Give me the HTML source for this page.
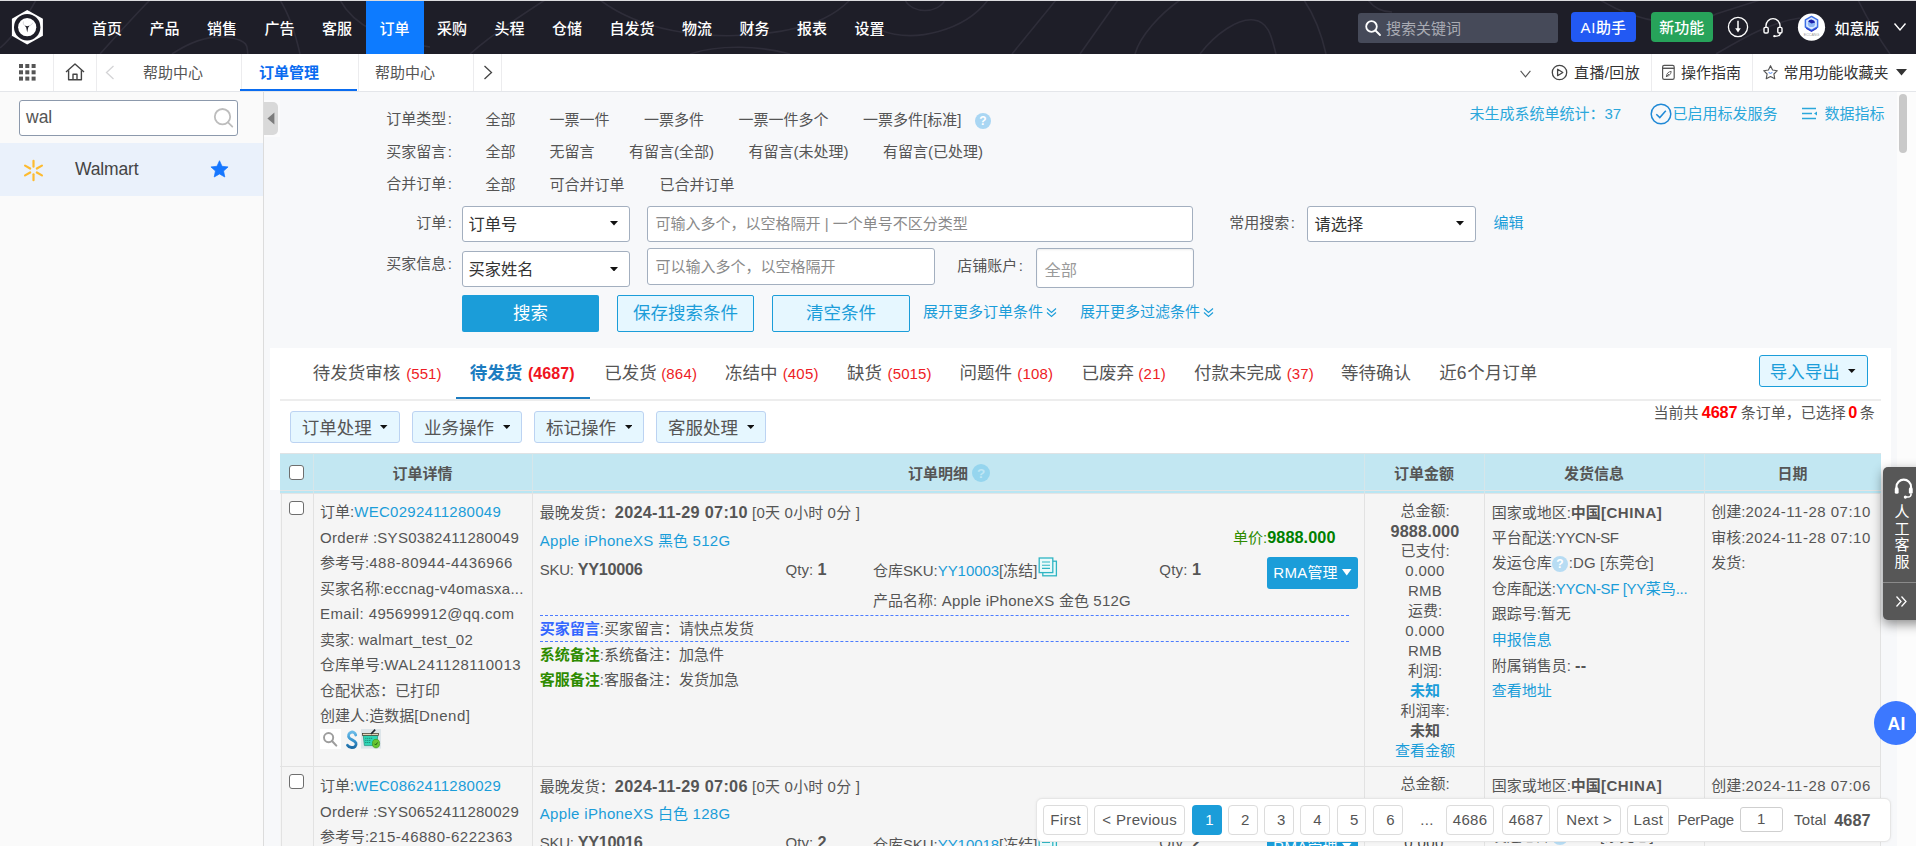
<!DOCTYPE html>
<html lang="zh-CN">
<head>
<meta charset="utf-8">
<title>订单管理</title>
<style>
*{box-sizing:border-box;margin:0;padding:0}
html,body{width:1916px;height:846px;overflow:hidden;background:#f7f8fa}
body{font-family:"Liberation Sans","Noto Sans CJK SC",sans-serif;font-size:15px;color:#333;position:relative}
.abs{position:absolute;white-space:nowrap}
a{color:#1b9dd9;text-decoration:none}
/* ---------- top nav ---------- */
#nav{position:absolute;left:0;top:0;width:1916px;height:54px;background:#1e1e28;overflow:hidden}
#nav .it{position:absolute;top:0;height:54px;line-height:57px;color:#fff;font-size:15px;white-space:nowrap;font-weight:500}
#nav .act{position:absolute;left:365.5px;top:0;width:58.5px;height:54px;background:#0d7bff}
/* ---------- tab bar ---------- */
#tabbar{position:absolute;left:0;top:54px;width:1916px;height:38px;background:#fff;border-bottom:1px solid #e4e6ea}
#tabbar .t{position:absolute;top:0;height:37px;line-height:37px;font-size:15px;color:#555;white-space:nowrap}
#tabbar .vl{position:absolute;top:0;width:1px;height:37px;background:#ececee}
/* ---------- sidebar ---------- */
#side{position:absolute;left:0;top:92px;width:264px;height:754px;background:#fafafa;border-right:1px solid #dcdcdc}
/* ---------- main ---------- */
#main{position:absolute;left:264px;top:92px;width:1652px;height:754px;background:#f7f8fa;overflow:hidden}
.f{position:absolute;white-space:nowrap;font-size:15px;line-height:20px;color:#444}
.lnk{color:#1b9dd9}
</style>
</head>
<body>
<!-- NAV -->
<div id="nav">
<svg class="abs" style="left:0;top:0" width="1916" height="54" viewBox="0 0 1916 54" fill="none" stroke="#2e2d39" stroke-width="1.6">
<path d="M0 48 C14 36 26 18 36 0"/><path d="M100 54 C118 34 136 14 150 0"/><path d="M172 54 C190 42 212 34 232 38 S246 50 248 54"/>
<path d="M280 0 C290 16 296 36 300 54"/><path d="M340 0 C352 22 380 40 430 47"/><path d="M470 54 C490 36 520 16 545 0"/>
<path d="M600 0 C640 30 700 40 760 34 S840 10 850 0"/><path d="M690 54 C720 44 760 46 790 54"/>
<path d="M905 0 C912 14 938 14 945 0"/><path d="M880 30 C915 44 965 30 988 0"/>
<path d="M1012 54 L1056 0"/><path d="M1080 54 L1118 0"/><path d="M1135 54 C1140 36 1160 14 1180 0"/>
<path d="M1200 54 C1215 34 1238 18 1254 20 S1272 40 1276 54"/><path d="M1304 0 C1316 18 1322 36 1326 54"/><path d="M1368 0 C1374 8 1382 12 1392 12"/>
<path d="M1600 0 C1640 24 1690 30 1716 14 L1760 0"/><path d="M1716 54 C1740 40 1770 22 1800 18"/><path d="M1858 0 C1868 20 1880 40 1890 54"/>
</svg>
<div class="act"></div><div class="abs" style="left:0;top:0;width:1916px;height:1px;background:#dcdcdf"></div>
<svg class="abs" style="left:9px;top:8px" width="38" height="38" viewBox="0 0 38 38">
<polygon points="18.2,2 33.9,10.7 33.9,27.8 18.2,36.5 2.9,27.8 2.9,10.7" fill="#fff"/>
<circle cx="18.2" cy="19.2" r="13.2" fill="#1e1e28"/>
<circle cx="18.2" cy="19.2" r="9.1" fill="#fff"/>
<path d="M18.2 24.5 L17.2 19.6 L15.6 17.6 L18.2 18.3 L20.8 17.6 L19.2 19.6 Z" fill="#1e1e28"/>
<path d="M14.5 13.5 C14 15 14.5 16.5 15.6 17.6 M21 17.5 C22.3 17 23.3 16 23.6 14.8" stroke="#c9c9cf" stroke-width=".8" fill="none"/>
</svg>
<div class="it" style="left:92px">首页</div>
<div class="it" style="left:149.5px">产品</div>
<div class="it" style="left:207px">销售</div>
<div class="it" style="left:264.5px">广告</div>
<div class="it" style="left:322px">客服</div>
<div class="it" style="left:379.5px">订单</div>
<div class="it" style="left:437px">采购</div>
<div class="it" style="left:494.5px">头程</div>
<div class="it" style="left:552px">仓储</div>
<div class="it" style="left:609.5px">自发货</div>
<div class="it" style="left:682px">物流</div>
<div class="it" style="left:739.5px">财务</div>
<div class="it" style="left:797px">报表</div>
<div class="it" style="left:854.5px">设置</div>
<div class="abs" style="left:1358px;top:13px;width:200px;height:30px;background:#464a59;border-radius:3px"></div>
<svg class="abs" style="left:1364px;top:19px" width="18" height="18" viewBox="0 0 18 18" fill="none" stroke="#fff" stroke-width="1.8"><circle cx="7.5" cy="7.5" r="5.3"/><path d="M11.5 11.5 L16 16" stroke-linecap="round"/></svg>
<div class="abs" style="left:1386px;top:13px;line-height:31px;font-size:15px;color:#a9abb3">搜索关键词</div>
<div class="abs" style="left:1570.5px;top:12px;width:65.5px;font-weight:500;height:30px;background:#2259f3;border-radius:4px;color:#fff;font-size:15px;line-height:31px;text-align:center"><span style="letter-spacing:.6px">AI</span>助手</div>
<div class="abs" style="left:1650.5px;top:12px;width:62.5px;font-weight:500;height:30px;background:#27a35a;border-radius:4px;color:#fff;font-size:15px;line-height:31px;text-align:center">新功能</div>
<svg class="abs" style="left:1727px;top:16px" width="22" height="22" viewBox="0 0 22 22" fill="none" stroke="#fff" stroke-width="1.3"><circle cx="11" cy="11" r="9.6"/><path d="M11 4.8 V13.5" stroke-width="1.5"/><path d="M8.2 12.3 H13.8 L11 16.4 Z" fill="#fff" stroke="none"/></svg>
<svg class="abs" style="left:1761px;top:15px" width="24" height="24" viewBox="0 0 24 24" fill="none" stroke="#fff" stroke-width="1.4"><path d="M5 13 V10.6 a7 7 0 0 1 14 0 V13"/><rect x="3" y="12.4" width="4.2" height="5.6" rx="1.2"/><rect x="16.8" y="12.4" width="4.2" height="5.6" rx="1.2"/><path d="M19.3 18 c0 2.3 -2.4 3.3 -5.2 3.3" stroke-linecap="round"/><circle cx="13.3" cy="21.2" r="1.1" fill="#fff" stroke="none"/></svg>
<svg class="abs" style="left:1797px;top:13px" width="29" height="29" viewBox="0 0 29 29"><circle cx="14.5" cy="14.2" r="13.6" fill="#fff"/><polygon points="14.5,3.4 20.6,6.9 20.6,14 14.5,17.5 8.4,14 8.4,6.9" fill="#dbe8ff" stroke="#3d6fe6" stroke-width="1.5" stroke-linejoin="round"/><circle cx="14.5" cy="10.4" r="3.7" fill="#8db6f6"/><path d="M14.5 10.4 L11.2 8.6 A3.7 3.7 0 0 1 18.1 9.6 Z" fill="#1c1fa8"/><path d="M9.2 15.2 L14.5 18.2 L19.8 15.2" fill="none" stroke="#2a36c8" stroke-width="1.3"/><text x="14.5" y="23.4" font-size="3.6" text-anchor="middle" fill="#9a9a9a" font-family="Liberation Sans, sans-serif">ECCANG</text></svg>
<div class="it" style="left:1834.5px">如意版</div>
<svg class="abs" style="left:1893px;top:22px" width="14" height="10" viewBox="0 0 14 10" fill="none" stroke="#fff" stroke-width="1.4"><path d="M1.5 1.5 L7 8 L12.5 1.5"/></svg>
</div>
<!-- TABBAR -->
<div id="tabbar">
<svg class="abs" style="left:19px;top:10px" width="17" height="17" viewBox="0 0 17 17" fill="#555"><rect x="0" y="0" width="4" height="4"/><rect x="6.3" y="0" width="4" height="4"/><rect x="12.6" y="0" width="4" height="4"/><rect x="0" y="6.3" width="4" height="4"/><rect x="6.3" y="6.3" width="4" height="4"/><rect x="12.6" y="6.3" width="4" height="4"/><rect x="0" y="12.6" width="4" height="4"/><rect x="6.3" y="12.6" width="4" height="4"/><rect x="12.6" y="12.6" width="4" height="4"/></svg>
<div class="vl" style="left:53px"></div>
<svg class="abs" style="left:65px;top:9px" width="20" height="18" viewBox="0 0 20 18" fill="none" stroke="#444" stroke-width="1.4" stroke-linejoin="round"><path d="M1 9 L10 1 L19 9"/><path d="M3.6 7.2 V16.8 H16.4 V7.2"/><path d="M8 16.8 V11.2 H12 V16.8"/></svg>
<div class="vl" style="left:96px"></div>
<svg class="abs" style="left:105px;top:11px" width="10" height="15" viewBox="0 0 10 15" fill="none" stroke="#d4d4d6" stroke-width="1.3"><path d="M8.5 1 L1.5 7.5 L8.5 14"/></svg>
<div class="t" style="left:143px">帮助中心</div>
<div class="vl" style="left:241px"></div>
<div class="t" style="left:259px;color:#0a6cf0;font-weight:bold">订单管理</div>
<div class="abs" style="left:240px;top:35px;width:117px;height:2px;background:#0a6cf0"></div>
<div class="vl" style="left:358px"></div>
<div class="t" style="left:375px">帮助中心</div>
<div class="vl" style="left:473px"></div>
<svg class="abs" style="left:483px;top:11px" width="10" height="15" viewBox="0 0 10 15" fill="none" stroke="#444" stroke-width="1.3"><path d="M1.5 1 L8.5 7.5 L1.5 14"/></svg>
<div class="vl" style="left:501px"></div>
<svg class="abs" style="left:1520px;top:16px" width="11" height="8" viewBox="0 0 11 8" fill="none" stroke="#555" stroke-width="1.1"><path d="M.6 .8 L5.5 6.8 L10.4 .8"/></svg>
<svg class="abs" style="left:1551px;top:10px" width="17" height="17" viewBox="0 0 17 17" fill="none" stroke="#444" stroke-width="1.3"><circle cx="8.5" cy="8.5" r="7.2"/><path d="M6.6 5.3 V11.7 L11.8 8.5 Z" stroke-linejoin="round"/></svg>
<div class="t" style="left:1574px;color:#333;letter-spacing:.4px">直播/回放</div>
<div class="vl" style="left:1651px"></div>
<svg class="abs" style="left:1661px;top:10px" width="15" height="17" viewBox="0 0 15 17" fill="none" stroke="#555" stroke-width="1.2"><rect x="1.6" y="1.4" width="11.6" height="14" rx="1.6"/><path d="M1.6 4.3 H13.2" stroke-width="1.4"/><path d="M5.4 12.4 C5.6 9.6 7.4 7.6 10.2 7.4 C10 10 8.4 12 5.4 12.4 Z M5 13 L8 10" stroke-width=".9"/></svg>
<div class="t" style="left:1681px;color:#333">操作指南</div>
<div class="vl" style="left:1752px"></div>
<svg class="abs" style="left:1762px;top:9.5px" width="17" height="17" viewBox="0 0 18 18" fill="none" stroke="#555" stroke-width="1.2" stroke-linejoin="round"><path d="M9 1.8 L11.2 6.4 L16.2 7.1 L12.6 10.6 L13.5 15.6 L9 13.2 L4.5 15.6 L5.4 10.6 L1.8 7.1 L6.8 6.4 Z"/><path d="M7 9 Q9 10.8 11 9" stroke="#3b7bf0" stroke-width="1"/></svg>
<div class="t" style="left:1783.5px;color:#333">常用功能收藏夹</div>
<svg class="abs" style="left:1896px;top:15px" width="11" height="7" viewBox="0 0 11 7" fill="#333"><path d="M0 0 H11 L5.5 6.5 Z"/></svg>
</div>
<!-- SIDEBAR -->
<div id="side">
<div class="abs" style="left:19px;top:8px;width:219px;height:36px;background:#fff;border:1px solid #8c99ac;border-radius:3px"></div>
<div class="abs" style="left:26px;top:8px;line-height:35px;font-size:17.5px;color:#555">wal</div>
<svg class="abs" style="left:212px;top:14px" width="24" height="24" viewBox="0 0 24 24" fill="none" stroke="#bdbdbd" stroke-width="1.8"><circle cx="10.5" cy="10.7" r="7.7"/><path d="M16 16.4 L20.3 20.6" stroke-linecap="round"/></svg>
<div class="abs" style="left:0;top:51px;width:263px;height:53px;background:#eaf1fb"></div>
<svg class="abs" style="left:21px;top:66px" width="25" height="25" viewBox="-13.6 -13.6 27.2 27.2" stroke="#fdbb30" stroke-width="2.4" stroke-linecap="round"><g id="spk"><path d="M0 -4.2 V-10.6"/><path d="M0 4.2 V10.6"/></g><use href="#spk" transform="rotate(60)"/><use href="#spk" transform="rotate(120)"/></svg>
<div class="abs" style="left:75px;top:51px;line-height:53px;font-size:17.5px;color:#444;letter-spacing:-.15px">Walmart</div>
<svg class="abs" style="left:210px;top:67.5px" width="19" height="18" viewBox="0 0 21 20" fill="#1677ff"><path d="M10.5 .8 L13.3 7 L20 7.7 L15 12.2 L16.4 18.9 L10.5 15.5 L4.6 18.9 L6 12.2 L1 7.7 L7.7 7 Z" stroke="#1677ff" stroke-width=".8" stroke-linejoin="round"/></svg>
</div>

<!-- MAIN -->
<div id="main">
<div class="abs" style="left:0;top:8px;width:16px;height:37px;background:#fbfbfc"></div>
<div class="abs" style="left:0;top:10px;width:13.5px;height:33px;background:#d9d9d9;border-radius:0 5px 5px 0"></div>
<svg class="abs" style="left:2.5px;top:20px" width="8" height="13" viewBox="0 0 8 13" fill="#7c7c7c"><path d="M7.4 .4 V12.6 L.4 6.5 Z"/></svg>
<div class="f" style="right:1464px;top:17px;font-size:15px;line-height:20px;color:#555;">订单类型<span style="margin-left:1.5px">:</span></div>
<div class="f " style="left:221.5px;top:18px;font-size:15px;line-height:20px;color:#555;">全部</div>
<div class="f " style="left:285.5px;top:18px;font-size:15px;line-height:20px;color:#555;">一票一件</div>
<div class="f " style="left:380px;top:18px;font-size:15px;line-height:20px;color:#555;">一票多件</div>
<div class="f " style="left:474.5px;top:18px;font-size:15px;line-height:20px;color:#555;">一票一件多个</div>
<div class="f " style="left:599px;top:18px;font-size:15px;line-height:20px;color:#555;">一票多件[标准]</div>
<div class="f" style="right:1464px;top:49.5px;font-size:15px;line-height:20px;color:#555;">买家留言<span style="margin-left:1.5px">:</span></div>
<div class="f " style="left:221.5px;top:50px;font-size:15px;line-height:20px;color:#555;">全部</div>
<div class="f " style="left:285.5px;top:50px;font-size:15px;line-height:20px;color:#555;">无留言</div>
<div class="f " style="left:365px;top:50px;font-size:15px;line-height:20px;color:#555;">有留言(全部)</div>
<div class="f " style="left:484.5px;top:50px;font-size:15px;line-height:20px;color:#555;">有留言(未处理)</div>
<div class="f " style="left:619px;top:50px;font-size:15px;line-height:20px;color:#555;">有留言(已处理)</div>
<div class="f" style="right:1464px;top:82px;font-size:15px;line-height:20px;color:#555;">合并订单<span style="margin-left:1.5px">:</span></div>
<div class="f " style="left:221.5px;top:83px;font-size:15px;line-height:20px;color:#555;">全部</div>
<div class="f " style="left:285.5px;top:83px;font-size:15px;line-height:20px;color:#555;">可合并订单</div>
<div class="f " style="left:395.5px;top:83px;font-size:15px;line-height:20px;color:#555;">已合并订单</div>
<div class="abs" style="left:711px;top:21px;width:16px;height:16px;border-radius:50%;background:#a9d6f3;color:#fff;font-size:12px;line-height:17px;text-align:center;font-weight:bold">?</div>
<div class="f " style="left:1205.5px;top:12px;font-size:15px;line-height:20px;color:#2ba7db;">未生成系统单统计：37</div>
<svg class="abs" style="left:1386px;top:11px" width="22" height="22" viewBox="0 0 22 22" ><circle cx="11" cy="11" r="9.8" fill="none" stroke="#2089d6" stroke-width="1.5"/><path d="M6.3 11.2 L9.8 14.6 L15.8 7.8" fill="none" stroke="#2089d6" stroke-width="1.5"/></svg>
<div class="f " style="left:1408.5px;top:12px;font-size:15px;line-height:20px;color:#2ba7db;">已启用标发服务</div>
<svg class="abs" style="left:1537px;top:15px" width="17" height="13" viewBox="0 0 17 13" ><path d="M1 1.5 H15 M1 6.5 H11 M1 11.5 H15" stroke="#2ba7db" stroke-width="1.6" fill="none"/><path d="M16 4.6 V8.4 L13 6.5 Z" fill="#2ba7db"/></svg>
<div class="f " style="left:1560.5px;top:12px;font-size:15px;line-height:20px;color:#2ba7db;">数据指标</div>
<div class="f" style="right:1464px;top:121px;font-size:15px;line-height:20px;color:#555;">订单<span style="margin-left:1.5px">:</span></div>
<div class="abs" style="left:198px;top:114px;width:168px;height:36px;background:#fff;border:1px solid #a3afbf;border-radius:3px"></div>
<div class="f " style="left:204.5px;top:122px;font-size:16.25px;line-height:20px;color:#333;">订单号</div>
<svg class="abs" style="left:346px;top:129.45px" width="8" height="4.5" viewBox="0 0 8 4.5" ><path d="M0 0 H8 L4.0 4.5 Z" fill="#111"/></svg>
<div class="abs" style="left:383px;top:114px;width:546px;height:36px;background:#fff;border:1px solid #a3afbf;border-radius:3px"></div>
<div class="f " style="left:391.5px;top:121.5px;font-size:15px;line-height:20px;color:#8a8a8a;">可输入多个，以空格隔开 | 一个单号不区分类型</div>
<div class="f" style="right:621px;top:120.5px;font-size:15px;line-height:20px;color:#555;">常用搜索<span style="margin-left:1.5px">:</span></div>
<div class="abs" style="left:1043px;top:114px;width:169px;height:36px;background:#fff;border:1px solid #a3afbf;border-radius:3px"></div>
<div class="f " style="left:1050.5px;top:122px;font-size:16.25px;line-height:20px;color:#333;">请选择</div>
<svg class="abs" style="left:1192px;top:129.45px" width="8" height="4.5" viewBox="0 0 8 4.5" ><path d="M0 0 H8 L4.0 4.5 Z" fill="#111"/></svg>
<div class="f " style="left:1229.5px;top:120.5px;font-size:15px;line-height:20px;color:#1b9dd9;">编辑</div>
<div class="f" style="right:1464px;top:162px;font-size:15px;line-height:20px;color:#555;">买家信息<span style="margin-left:1.5px">:</span></div>
<div class="abs" style="left:198px;top:159px;width:168px;height:36px;background:#fff;border:1px solid #a3afbf;border-radius:3px"></div>
<div class="f " style="left:204.5px;top:167px;font-size:16.25px;line-height:20px;color:#333;">买家姓名</div>
<svg class="abs" style="left:346px;top:174.55px" width="8" height="4.5" viewBox="0 0 8 4.5" ><path d="M0 0 H8 L4.0 4.5 Z" fill="#111"/></svg>
<div class="abs" style="left:383px;top:156px;width:288px;height:37px;background:#fff;border:1px solid #a3afbf;border-radius:3px"></div>
<div class="f " style="left:391.5px;top:164.5px;font-size:15px;line-height:20px;color:#8a8a8a;">可以输入多个，以空格隔开</div>
<div class="f" style="right:893px;top:164px;font-size:15px;line-height:20px;color:#555;">店铺账户<span style="margin-left:1.5px">:</span></div>
<div class="abs" style="left:772px;top:156px;width:158px;height:40px;background:#fff;border:1px solid #a3afbf;border-radius:3px;box-shadow:inset 0 1px 2px rgba(0,0,0,.08)"></div>
<div class="f " style="left:780.5px;top:167.5px;font-size:16.25px;line-height:20px;color:#9a9a9a;">全部</div>
<div class="abs" style="left:198px;top:203px;width:137px;height:37px;background:#1b9dd9;border-radius:2px"></div>
<div class="f" style="left:198px;width:137px;text-align:center;top:211px;font-size:17.5px;line-height:20px;color:#fff;">搜索</div>
<div class="abs" style="left:353px;top:203px;width:137px;height:37px;background:#e6f7ff;border:1px solid #1b9dd9;border-radius:2px"></div>
<div class="f" style="left:353px;width:137px;text-align:center;top:211px;font-size:17.5px;line-height:20px;color:#1b9dd9;">保存搜索条件</div>
<div class="abs" style="left:508px;top:203px;width:138px;height:37px;background:#e6f7ff;border:1px solid #1b9dd9;border-radius:2px"></div>
<div class="f" style="left:508px;width:138px;text-align:center;top:211px;font-size:17.5px;line-height:20px;color:#1b9dd9;">清空条件</div>
<div class="f " style="left:659px;top:209.5px;font-size:15px;line-height:20px;color:#1b9dd9;">展开更多订单条件</div>
<svg class="abs" style="left:782px;top:214.5px" width="11" height="11" viewBox="0 0 11 11" ><path d="M1 1.5 L5.5 5.5 L10 1.5 M1 5.5 L5.5 9.5 L10 5.5" fill="none" stroke="#1b9dd9" stroke-width="1.1"/></svg>
<div class="f " style="left:816px;top:209.5px;font-size:15px;line-height:20px;color:#1b9dd9;">展开更多过滤条件</div>
<svg class="abs" style="left:939px;top:214.5px" width="11" height="11" viewBox="0 0 11 11" ><path d="M1 1.5 L5.5 5.5 L10 1.5 M1 5.5 L5.5 9.5 L10 5.5" fill="none" stroke="#1b9dd9" stroke-width="1.1"/></svg>
<div class="abs" style="left:6px;top:256px;width:1621px;height:142px;background:#fff"></div>
<div class="abs" style="left:1633px;top:0px;width:19px;height:754px;background:#fcfcfc"></div>
<div class="abs" style="left:1635px;top:2px;width:8px;height:59px;background:#c9c9c9;border-radius:4px"></div>
<div class="f " style="left:48.8px;top:269px;font-size:17.5px;line-height:24px;color:#555;">待发货审核</div>
<div class="f" style="left:142.3px;top:269.5px;font-size:15px;line-height:24px;color:#ee1c25;"><span style="letter-spacing:0.034px">(551)</span></div>
<div class="f " style="left:340.2px;top:269px;font-size:17.5px;line-height:24px;color:#555;">已发货</div>
<div class="f" style="left:397.2px;top:269.5px;font-size:15px;line-height:24px;color:#ee1c25;"><span style="letter-spacing:0.174px">(864)</span></div>
<div class="f " style="left:460.9px;top:269px;font-size:17.5px;line-height:24px;color:#555;">冻结中</div>
<div class="f" style="left:518.7px;top:269.5px;font-size:15px;line-height:24px;color:#ee1c25;"><span style="letter-spacing:0.174px">(405)</span></div>
<div class="f " style="left:582.9px;top:269px;font-size:17.5px;line-height:24px;color:#555;">缺货</div>
<div class="f" style="left:623.6px;top:269.5px;font-size:15px;line-height:24px;color:#ee1c25;"><span style="letter-spacing:0.107px">(5015)</span></div>
<div class="f " style="left:695.5px;top:269px;font-size:17.5px;line-height:24px;color:#555;">问题件</div>
<div class="f" style="left:753.2px;top:269.5px;font-size:15px;line-height:24px;color:#ee1c25;"><span style="letter-spacing:0.194px">(108)</span></div>
<div class="f " style="left:817.5px;top:269px;font-size:17.5px;line-height:24px;color:#555;">已废弃</div>
<div class="f" style="left:874.3px;top:269.5px;font-size:15px;line-height:24px;color:#ee1c25;"><span style="letter-spacing:0.253px">(21)</span></div>
<div class="f " style="left:929.9px;top:269px;font-size:17.5px;line-height:24px;color:#555;">付款未完成</div>
<div class="f" style="left:1022.8px;top:269.5px;font-size:15px;line-height:24px;color:#ee1c25;"><span style="letter-spacing:0.053px">(37)</span></div>
<div class="f " style="left:205.8px;top:269px;font-size:17.5px;line-height:24px;color:#1c7cc0;font-weight:bold">待发货</div>
<div class="f" style="left:263.9px;top:269.5px;font-size:16px;line-height:24px;color:#f0141e;"><span style="font-weight:bold;letter-spacing:0.108px">(4687)</span></div>
<div class="f " style="left:1077px;top:269px;font-size:17.5px;line-height:24px;color:#555;">等待确认</div>
<div class="f" style="left:1175.2px;top:269px;font-size:17.5px;line-height:24px;color:#555;">近<span style="letter-spacing:0.866px">6</span>个月订单</div>
<div class="abs" style="left:16px;top:307px;width:1601px;height:1.5px;background:#ededed"></div>
<div class="abs" style="left:192px;top:305px;width:134px;height:2px;background:#1c7cc0"></div>
<div class="abs" style="left:1495px;top:263px;width:109px;height:32px;background:#e6f7ff;border:1px solid #1b9dd9;border-radius:3px"></div>
<div class="f " style="left:1505.8px;top:267.5px;font-size:17.5px;line-height:24px;color:#1b9dd9;">导入导出</div>
<svg class="abs" style="left:1584.25px;top:277px" width="7.5" height="4" viewBox="0 0 7.5 4" ><path d="M0 0 H7.5 L3.75 4 Z" fill="#111"/></svg>
<div class="f" style="left:1389.4px;top:309.7px;font-size:15px;line-height:20px;color:#555;">当前共<span style="font-size:12px"> </span><span style="font-weight:bold;font-size:16.25px;color:#f00;letter-spacing:-0.142px">4687</span><span style="font-size:12px"> </span>条订单，已选择<span style="font-size:9px"> </span><span style="font-weight:bold;font-size:16.25px;color:#f00">0</span><span style="font-size:9px"> </span>条</div>
<div class="abs" style="left:26px;top:319px;width:109.6px;height:31.6px;background:#e6f7ff;border:1px solid #bcd3f2;border-radius:3px"></div>
<div class="f " style="left:37.8px;top:323.5px;font-size:17.5px;line-height:24px;color:#555;">订单处理</div>
<svg class="abs" style="left:116.45px;top:333px" width="7.5" height="4" viewBox="0 0 7.5 4" ><path d="M0 0 H7.5 L3.75 4 Z" fill="#111"/></svg>
<div class="abs" style="left:148.1px;top:319px;width:109.6px;height:31.6px;background:#e6f7ff;border:1px solid #bcd3f2;border-radius:3px"></div>
<div class="f " style="left:159.9px;top:323.5px;font-size:17.5px;line-height:24px;color:#555;">业务操作</div>
<svg class="abs" style="left:238.55px;top:333px" width="7.5" height="4" viewBox="0 0 7.5 4" ><path d="M0 0 H7.5 L3.75 4 Z" fill="#111"/></svg>
<div class="abs" style="left:270.2px;top:319px;width:109.6px;height:31.6px;background:#e6f7ff;border:1px solid #bcd3f2;border-radius:3px"></div>
<div class="f " style="left:282px;top:323.5px;font-size:17.5px;line-height:24px;color:#555;">标记操作</div>
<svg class="abs" style="left:360.65px;top:333px" width="7.5" height="4" viewBox="0 0 7.5 4" ><path d="M0 0 H7.5 L3.75 4 Z" fill="#111"/></svg>
<div class="abs" style="left:392.3px;top:319px;width:109.6px;height:31.6px;background:#e6f7ff;border:1px solid #bcd3f2;border-radius:3px"></div>
<div class="f " style="left:404.1px;top:323.5px;font-size:17.5px;line-height:24px;color:#555;">客服处理</div>
<svg class="abs" style="left:482.75px;top:333px" width="7.5" height="4" viewBox="0 0 7.5 4" ><path d="M0 0 H7.5 L3.75 4 Z" fill="#111"/></svg>
<div class="abs" style="left:16px;top:361px;width:1601px;height:37px;background:#c2e7f2"></div>
<div class="abs" style="left:16px;top:398px;width:1601px;height:1px;background:#e4e4e4"></div>
<div class="abs" style="left:16px;top:361px;width:1601px;height:1px;background:#dfe3e5"></div>
<div class="abs" style="left:16px;top:399px;width:1601px;height:2px;background:#b9e6f3"></div>
<div class="abs" style="left:49px;top:361px;width:1px;height:40px;background:#d6e6ea"></div>
<div class="abs" style="left:268px;top:361px;width:1px;height:40px;background:#d6e6ea"></div>
<div class="abs" style="left:1100px;top:361px;width:1px;height:40px;background:#d6e6ea"></div>
<div class="abs" style="left:1220px;top:361px;width:1px;height:40px;background:#d6e6ea"></div>
<div class="abs" style="left:1440px;top:361px;width:1px;height:40px;background:#d6e6ea"></div>
<div class="abs" style="left:25.2px;top:373.2px;width:14.5px;height:14.5px;background:#fff;border:1.3px solid #6e6e6e;border-radius:3px"></div>
<div class="f" style="left:49px;width:219px;text-align:center;top:371.8px;font-size:15px;line-height:20px;color:#555;font-weight:bold">订单详情</div>
<div class="f " style="left:644px;top:371.8px;font-size:15px;line-height:20px;color:#555;font-weight:bold">订单明细</div>
<div class="abs" style="left:708px;top:372px;width:18px;height:18px;border-radius:50%;background:#95d5ee;color:#bfe6f4;font-size:13.5px;line-height:19px;text-align:center;font-weight:bold">?</div>
<div class="f" style="left:1100px;width:120px;text-align:center;top:371.8px;font-size:15px;line-height:20px;color:#555;font-weight:bold">订单金额</div>
<div class="f" style="left:1220px;width:220px;text-align:center;top:371.8px;font-size:15px;line-height:20px;color:#555;font-weight:bold">发货信息</div>
<div class="f" style="left:1440px;width:177px;text-align:center;top:371.8px;font-size:15px;line-height:20px;color:#555;font-weight:bold">日期</div>
<div class="abs" style="left:16px;top:401px;width:1601px;height:353px;background:#f5f5f5;border-top:1px solid #e4e4e4"></div>
<div class="abs" style="left:16.5px;top:401px;width:1px;height:353px;background:#e2e2e2"></div>
<div class="abs" style="left:49px;top:401px;width:1px;height:353px;background:#e2e2e2"></div>
<div class="abs" style="left:268px;top:401px;width:1px;height:353px;background:#e2e2e2"></div>
<div class="abs" style="left:1100px;top:401px;width:1px;height:353px;background:#e2e2e2"></div>
<div class="abs" style="left:1220px;top:401px;width:1px;height:353px;background:#e2e2e2"></div>
<div class="abs" style="left:1440px;top:401px;width:1px;height:353px;background:#e2e2e2"></div>
<div class="abs" style="left:1616px;top:401px;width:1px;height:353px;background:#e2e2e2"></div>
<div class="abs" style="left:16px;top:674px;width:1601px;height:1px;background:#e2e2e2"></div>
<div class="abs" style="left:25.2px;top:408.6px;width:14.5px;height:14.5px;background:#fff;border:1.3px solid #6e6e6e;border-radius:3px"></div>
<div class="f" style="left:56.1px;top:410.4px;font-size:15px;line-height:20px;color:#555;">订单:<span style="color:#1b9dd9;letter-spacing:0.28px">WEC0292411280049</span></div>
<div class="f" style="left:56.1px;top:435.9px;font-size:15px;line-height:20px;color:#555;"><span style="letter-spacing:0.276px">Order# :SYS0382411280049</span></div>
<div class="f" style="left:56.1px;top:461.4px;font-size:15px;line-height:20px;color:#555;">参考号:<span style="letter-spacing:0.5px">488-80944-4436966</span></div>
<div class="f" style="left:56.1px;top:486.9px;font-size:15px;line-height:20px;color:#555;">买家名称:<span style="letter-spacing:0.294px">eccnag-v4omasxa...</span></div>
<div class="f" style="left:56.1px;top:512.4px;font-size:15px;line-height:20px;color:#555;"><span style="letter-spacing:0.389px">Email: 495699912@qq.com</span></div>
<div class="f" style="left:56.1px;top:537.9px;font-size:15px;line-height:20px;color:#555;">卖家: <span style="letter-spacing:0.307px">walmart_test_02</span></div>
<div class="f" style="left:56.1px;top:563.4px;font-size:15px;line-height:20px;color:#555;">仓库单号:<span style="letter-spacing:0.46px">WAL241128110013</span></div>
<div class="f" style="left:56.1px;top:588.9px;font-size:15px;line-height:20px;color:#555;">仓配状态：已打印</div>
<div class="f" style="left:56.1px;top:614.4px;font-size:15px;line-height:20px;color:#555;">创建人:造数据<span style="letter-spacing:0.526px">[Dnend]</span></div>
<div class="f" style="left:275.8px;top:409.9px;font-size:15px;line-height:20px;color:#555;">最晚发货：<span style="font-weight:bold;font-size:16.25px;letter-spacing:0.289px">2024-11-29 07:10</span> <span style="letter-spacing:0.289px">[0</span>天<span style="letter-spacing:0.289px"> 0</span>小时<span style="letter-spacing:0.289px"> 0</span>分<span style="letter-spacing:0.289px"> ]</span></div>
<div class="f" style="left:275.8px;top:438.7px;font-size:15px;line-height:20px;color:#1b9dd9;"><span style="letter-spacing:0.321px">Apple iPhoneXS </span>黑色<span style="letter-spacing:0.321px"> 512G</span></div>
<div class="f" style="left:275.8px;top:466.7px;font-size:15px;line-height:20px;color:#555;"><span style="letter-spacing:-0.272px">SKU: </span><span style="font-weight:bold;font-size:16.25px;letter-spacing:-0.272px">YY10006</span></div>
<div class="f" style="left:521.4px;top:466.7px;font-size:15px;line-height:20px;color:#555;"><span style="letter-spacing:0.076px">Qty: </span><span style="font-weight:bold;font-size:16.25px">1</span></div>
<div class="f" style="left:608.9px;top:469.4px;font-size:15px;line-height:20px;color:#555;">仓库<span style="letter-spacing:-0.053px">SKU:</span><span style="color:#1b9dd9;letter-spacing:-0.053px">YY10003</span><span style="letter-spacing:-0.053px">[</span>冻结<span style="letter-spacing:-0.053px">]</span></div>
<svg class="abs" style="left:774px;top:464.9px" width="20" height="20" viewBox="0 0 20 20" ><g fill="#eafafb" stroke="#2fb5c3" stroke-width="1.3"><rect x="4.8" y="4.2" width="13.6" height="14.6"/><rect x="1.2" y="1" width="13.6" height="14.6"/></g><path d="M4 5 H12 M4 8.2 H12 M4 11.4 H12" stroke="#2fb5c3" stroke-width="1.1"/></svg>
<div class="f" style="left:895.3px;top:466.7px;font-size:15px;line-height:20px;color:#555;"><span style="letter-spacing:0.196px">Qty: </span><span style="font-weight:bold;font-size:16.25px">1</span></div>
<div class="abs" style="left:1003px;top:465px;width:91px;height:31.6px;background:#1b9dd9;border-radius:3px"></div>
<div class="f" style="left:1009.3px;top:471.4px;font-size:15px;line-height:20px;color:#fff;"><span style="letter-spacing:0.252px">RMA</span>管理</div>
<svg class="abs" style="left:1078.3px;top:477.3px" width="9.5" height="6.5" viewBox="0 0 9.5 6.5" ><path d="M0 0 H9.5 L4.75 6.5 Z" fill="#fff"/></svg>
<div class="f" style="left:969px;top:435.4px;font-size:15px;line-height:20px;color:#2e8b00;">单价:<span style="font-weight:bold;font-size:16.25px;color:#008000;letter-spacing:0.068px">9888.000</span></div>
<div class="f" style="left:608.9px;top:498.9px;font-size:15px;line-height:20px;color:#555;">产品名称<span style="letter-spacing:0.249px">: Apple iPhoneXS </span>金色<span style="letter-spacing:0.249px"> 512G</span></div>
<div class="abs" style="left:276px;top:523px;width:809px;height:1.4px;border-top:1px dashed #4d7cfe"></div>
<div class="abs" style="left:276px;top:549.1px;width:809px;height:1.3px;border-top:1px dashed #4d7cfe"></div>
<div class="f" style="left:275.8px;top:526.7px;font-size:15px;line-height:20px;color:#555;"><span style="font-weight:bold;color:#3366ff">买家留言</span>:买家留言：请快点发货</div>
<div class="f" style="left:275.8px;top:552.6px;font-size:15px;line-height:20px;color:#555;"><span style="font-weight:bold;color:#2e8b00">系统备注</span>:系统备注：加急件</div>
<div class="f" style="left:275.8px;top:578.1px;font-size:15px;line-height:20px;color:#555;"><span style="font-weight:bold;color:#2e8b00">客服备注</span>:客服备注：发货加急</div>
<div class="f" style="left:1101px;width:120px;text-align:center;top:408.9px;color:#555;">总金额:</div>
<div class="f" style="left:1101px;width:120px;text-align:center;top:428.9px;color:#555;font-weight:bold;font-size:16.25px;letter-spacing:.15px">9888.000</div>
<div class="f" style="left:1101px;width:120px;text-align:center;top:448.9px;color:#555;">已支付:</div>
<div class="f" style="left:1101px;width:120px;text-align:center;top:468.9px;color:#555;letter-spacing:.4px">0.000</div>
<div class="f" style="left:1101px;width:120px;text-align:center;top:488.9px;color:#555;letter-spacing:.3px">RMB</div>
<div class="f" style="left:1101px;width:120px;text-align:center;top:508.9px;color:#555;">运费:</div>
<div class="f" style="left:1101px;width:120px;text-align:center;top:528.9px;color:#555;letter-spacing:.4px">0.000</div>
<div class="f" style="left:1101px;width:120px;text-align:center;top:548.9px;color:#555;letter-spacing:.3px">RMB</div>
<div class="f" style="left:1101px;width:120px;text-align:center;top:568.9px;color:#555;">利润:</div>
<div class="f" style="left:1101px;width:120px;text-align:center;top:588.9px;color:#1b9dd9;font-weight:bold">未知</div>
<div class="f" style="left:1101px;width:120px;text-align:center;top:608.9px;color:#555;">利润率:</div>
<div class="f" style="left:1101px;width:120px;text-align:center;top:628.9px;color:#555;font-weight:bold">未知</div>
<div class="f" style="left:1101px;width:120px;text-align:center;top:648.9px;color:#1b9dd9;">查看金额</div>
<div class="f" style="left:1227.7px;top:410.7px;font-size:15px;line-height:20px;color:#555;">国家或地区:<span style="font-weight:bold">中国</span><span style="font-weight:bold;letter-spacing:0.573px">[CHINA]</span></div>
<div class="f" style="left:1227.7px;top:435.9px;font-size:15px;line-height:20px;color:#555;">平台配送:<span style="letter-spacing:-0.459px">YYCN-SF</span></div>
<div class="f" style="left:1227.7px;top:461.4px;font-size:15px;line-height:20px;color:#555;">发运仓库</div>
<div class="abs" style="left:1288px;top:463.9px;width:16px;height:16px;border-radius:50%;background:#b7dcf3;color:#fff;font-size:12px;line-height:17px;text-align:center;font-weight:bold">?</div>
<div class="f" style="left:1304.8px;top:461.4px;font-size:15px;line-height:20px;color:#555;"><span style="letter-spacing:0.121px">:DG [</span>东莞仓<span style="letter-spacing:0.121px">]</span></div>
<div class="f" style="left:1227.7px;top:486.9px;font-size:15px;line-height:20px;color:#555;">仓库配送:<span style="color:#1b9dd9;letter-spacing:-0.385px">YYCN-SF [YY</span><span style="color:#1b9dd9">菜鸟</span><span style="color:#1b9dd9;letter-spacing:-0.385px">...</span></div>
<div class="f" style="left:1227.7px;top:512.4px;font-size:15px;line-height:20px;color:#555;">跟踪号:暂无</div>
<div class="f" style="left:1227.7px;top:537.9px;font-size:15px;line-height:20px;color:#1b9dd9;">申报信息</div>
<div class="f" style="left:1227.7px;top:563.4px;font-size:15px;line-height:20px;color:#555;">附属销售员: <span style="font-weight:bold;font-size:16.25px;letter-spacing:0.414px">--</span></div>
<div class="f" style="left:1227.7px;top:588.9px;font-size:15px;line-height:20px;color:#1b9dd9;">查看地址</div>
<div class="f" style="left:1447.3px;top:410.4px;font-size:15px;line-height:20px;color:#555;">创建:<span style="letter-spacing:0.5px">2024-11-28 07:10</span></div>
<div class="f" style="left:1447.3px;top:435.9px;font-size:15px;line-height:20px;color:#555;">审核:<span style="letter-spacing:0.5px">2024-11-28 07:10</span></div>
<div class="f" style="left:1447.3px;top:461.4px;font-size:15px;line-height:20px;color:#555;">发货:</div>
<div class="abs" style="left:56px;top:637px;width:20.5px;height:19.7px;background:#fff"></div>
<svg class="abs" style="left:56px;top:637px" width="20.5" height="20" viewBox="0 0 20.5 20" ><circle cx="8.6" cy="8.6" r="4.6" fill="none" stroke="#9d9d9d" stroke-width="1.9"/><path d="M12 12 L16.3 16.6" stroke="#9d9d9d" stroke-width="2.1" stroke-linecap="round"/></svg>
<svg class="abs" style="left:81px;top:637.5px" width="14" height="20" viewBox="0 0 16 21" preserveAspectRatio="none"><defs><linearGradient id="sg" x1="0" y1="0" x2="0" y2="1"><stop offset="0" stop-color="#6bbbe8"/><stop offset=".5" stop-color="#3a97d0"/><stop offset="1" stop-color="#1d6ca6"/></linearGradient></defs><path d="M12.3 5.2 C11.5 2.6 9 1.8 7.2 2.3 C4.2 3 3 6.2 5 8.4 C7 10.4 11.5 11 12.6 13.8 C13.4 16.3 11 18.6 7.6 18.4 C5.6 18.2 3.6 17.3 2.8 16" fill="none" stroke="url(#sg)" stroke-width="3.1" stroke-linecap="round"/></svg>
<svg class="abs" style="left:97px;top:637px" width="20" height="20" viewBox="0 0 20 20" ><rect x="0" y="0" width="20" height="19.6" fill="#dde5e9"/><path d="M2.2 6.2 H16.8 L15.6 16.6 H3.4 Z" fill="#2fd6b6" stroke="#1d8f7c" stroke-width=".7"/><rect x="1.4" y="4.4" width="16.2" height="1.9" fill="#eadfc4" stroke="#3a3326" stroke-width=".7"/><path d="M4.2 9.3 H11.5 M4.2 11.4 H10 M4.2 13.5 H9.2" stroke="#15806d" stroke-width=".8" stroke-dasharray="1.3 .6"/><path d="M10 5 L14.2 .6" stroke="#22262e" stroke-width="1.7"/><ellipse cx="15" cy="14.6" rx="3.6" ry="4.3" fill="#68c531" stroke="#3e9a1d" stroke-width=".7"/><path d="M13.5 14.8 L14.7 16 L16.6 13.5" stroke="#1f5e12" stroke-width="1" fill="none"/></svg>
<div class="abs" style="left:25.2px;top:682.2px;width:14.5px;height:14.5px;background:#fff;border:1.3px solid #6e6e6e;border-radius:3px"></div>
<div class="f" style="left:56.1px;top:684px;font-size:15px;line-height:20px;color:#555;">订单:<span style="color:#1b9dd9;letter-spacing:0.28px">WEC0862411280029</span></div>
<div class="f" style="left:56.1px;top:709.5px;font-size:15px;line-height:20px;color:#555;"><span style="letter-spacing:0.276px">Order# :SYS0652411280029</span></div>
<div class="f" style="left:56.1px;top:735px;font-size:15px;line-height:20px;color:#555;">参考号:<span style="letter-spacing:0.5px">215-46880-6222363</span></div>
<div class="f" style="left:275.8px;top:683.5px;font-size:15px;line-height:20px;color:#555;">最晚发货：<span style="font-weight:bold;font-size:16.25px;letter-spacing:0.289px">2024-11-29 07:06</span> <span style="letter-spacing:0.289px">[0</span>天<span style="letter-spacing:0.289px"> 0</span>小时<span style="letter-spacing:0.289px"> 0</span>分<span style="letter-spacing:0.289px"> ]</span></div>
<div class="f" style="left:275.8px;top:712.3px;font-size:15px;line-height:20px;color:#1b9dd9;"><span style="letter-spacing:0.321px">Apple iPhoneXS </span>白色<span style="letter-spacing:0.321px"> 128G</span></div>
<div class="f" style="left:275.8px;top:740.3px;font-size:15px;line-height:20px;color:#555;"><span style="letter-spacing:-0.272px">SKU: </span><span style="font-weight:bold;font-size:16.25px;letter-spacing:-0.272px">YY10016</span></div>
<div class="f" style="left:521.4px;top:740.3px;font-size:15px;line-height:20px;color:#555;"><span style="letter-spacing:0.076px">Qty: </span><span style="font-weight:bold;font-size:16.25px">2</span></div>
<div class="f" style="left:608.9px;top:743px;font-size:15px;line-height:20px;color:#555;">仓库<span style="letter-spacing:-0.053px">SKU:</span><span style="color:#1b9dd9;letter-spacing:-0.053px">YY10018</span><span style="letter-spacing:-0.053px">[</span>冻结<span style="letter-spacing:-0.053px">]</span></div>
<svg class="abs" style="left:774px;top:738.5px" width="20" height="20" viewBox="0 0 20 20" ><g fill="#eafafb" stroke="#2fb5c3" stroke-width="1.3"><rect x="4.8" y="4.2" width="13.6" height="14.6"/><rect x="1.2" y="1" width="13.6" height="14.6"/></g><path d="M4 5 H12 M4 8.2 H12 M4 11.4 H12" stroke="#2fb5c3" stroke-width="1.1"/></svg>
<div class="f" style="left:895.3px;top:740.3px;font-size:15px;line-height:20px;color:#555;"><span style="letter-spacing:0.196px">Qty: </span><span style="font-weight:bold;font-size:16.25px">2</span></div>
<div class="abs" style="left:1003px;top:738.6px;width:91px;height:31.6px;background:#1b9dd9;border-radius:3px"></div>
<div class="f" style="left:1009.3px;top:745px;font-size:15px;line-height:20px;color:#fff;"><span style="letter-spacing:0.252px">RMA</span>管理</div>
<svg class="abs" style="left:1078.3px;top:750.9px" width="9.5" height="6.5" viewBox="0 0 9.5 6.5" ><path d="M0 0 H9.5 L4.75 6.5 Z" fill="#fff"/></svg>
<div class="f" style="left:1101px;width:120px;text-align:center;top:681.6px;color:#555;">总金额:</div>
<div class="f" style="left:1227.7px;top:684.3px;font-size:15px;line-height:20px;color:#555;">国家或地区:<span style="font-weight:bold">中国</span><span style="font-weight:bold;letter-spacing:0.573px">[CHINA]</span></div>
<div class="f" style="left:1447.3px;top:684px;font-size:15px;line-height:20px;color:#555;">创建:<span style="letter-spacing:0.5px">2024-11-28 07:06</span></div>
<div class="f" style="left:1227.7px;top:734.4px;font-size:15px;line-height:20px;color:#555;">发运仓库</div>
<div class="abs" style="left:1288px;top:736.9px;width:16px;height:16px;border-radius:50%;background:#b7dcf3;color:#fff;font-size:12px;line-height:17px;text-align:center;font-weight:bold">?</div>
<div class="f" style="left:1304.8px;top:734.4px;font-size:15px;line-height:20px;color:#555;"><span style="letter-spacing:0.121px">:DG [</span>东莞仓<span style="letter-spacing:0.121px">]</span></div>
<div class="f" style="left:1100px;width:120px;text-align:center;top:741.4px;letter-spacing:.4px">0.000</div>
<div class="abs" style="left:772px;top:706px;width:855px;height:44px;background:#fff;border:1px solid #e6e6e6;border-radius:6px;box-shadow:0 0 3px rgba(0,0,0,.06)"></div>
<div class="abs" style="left:779.3px;top:713.2px;width:44.4px;height:29.5px;background:#fff;border:1px solid #dcdcdc;border-radius:4px"></div>
<div class="f" style="left:779.3px;width:44.4px;text-align:center;top:717.7px;font-size:15px;line-height:20px;color:#555;letter-spacing:0.35px;text-indent:0.35px">First</div>
<div class="abs" style="left:830.4px;top:713.2px;width:90.3px;height:29.5px;background:#fff;border:1px solid #dcdcdc;border-radius:4px"></div>
<div class="f" style="left:830.4px;width:90.3px;text-align:center;top:717.7px;font-size:15px;line-height:20px;color:#555;letter-spacing:0.35px;text-indent:0.35px">&lt; Previous</div>
<div class="abs" style="left:928.1px;top:713.2px;width:29.9px;height:29.5px;background:#1b9dd9;border-radius:4px"></div>
<div class="f" style="left:928.1px;width:29.9px;text-align:center;top:717.7px;font-size:15px;line-height:20px;color:#fff;letter-spacing:0.35px;text-indent:5px">1</div>
<div class="abs" style="left:964.2px;top:713.2px;width:29.5px;height:29.5px;background:#fff;border:1px solid #dcdcdc;border-radius:4px"></div>
<div class="f" style="left:964.2px;width:29.5px;text-align:center;top:717.7px;font-size:15px;line-height:20px;color:#555;letter-spacing:0.35px;text-indent:5px">2</div>
<div class="abs" style="left:1000.2px;top:713.2px;width:29.5px;height:29.5px;background:#fff;border:1px solid #dcdcdc;border-radius:4px"></div>
<div class="f" style="left:1000.2px;width:29.5px;text-align:center;top:717.7px;font-size:15px;line-height:20px;color:#555;letter-spacing:0.35px;text-indent:5px">3</div>
<div class="abs" style="left:1036.4px;top:713.2px;width:29.6px;height:29.5px;background:#fff;border:1px solid #dcdcdc;border-radius:4px"></div>
<div class="f" style="left:1036.4px;width:29.6px;text-align:center;top:717.7px;font-size:15px;line-height:20px;color:#555;letter-spacing:0.35px;text-indent:5px">4</div>
<div class="abs" style="left:1073.2px;top:713.2px;width:29.3px;height:29.5px;background:#fff;border:1px solid #dcdcdc;border-radius:4px"></div>
<div class="f" style="left:1073.2px;width:29.3px;text-align:center;top:717.7px;font-size:15px;line-height:20px;color:#555;letter-spacing:0.35px;text-indent:5px">5</div>
<div class="abs" style="left:1109.4px;top:713.2px;width:29.6px;height:29.5px;background:#fff;border:1px solid #dcdcdc;border-radius:4px"></div>
<div class="f" style="left:1109.4px;width:29.6px;text-align:center;top:717.7px;font-size:15px;line-height:20px;color:#555;letter-spacing:0.35px;text-indent:5px">6</div>
<div class="f" style="left:1146px;width:34px;text-align:center;top:717.7px;font-size:15px;line-height:20px;color:#555;letter-spacing:.4px">...</div>
<div class="abs" style="left:1181.6px;top:713.2px;width:48.7px;height:29.5px;background:#fff;border:1px solid #dcdcdc;border-radius:4px"></div>
<div class="f" style="left:1181.6px;width:48.7px;text-align:center;top:717.7px;font-size:15px;line-height:20px;color:#555;letter-spacing:0.35px;text-indent:0.35px">4686</div>
<div class="abs" style="left:1237.5px;top:713.2px;width:48.8px;height:29.5px;background:#fff;border:1px solid #dcdcdc;border-radius:4px"></div>
<div class="f" style="left:1237.5px;width:48.8px;text-align:center;top:717.7px;font-size:15px;line-height:20px;color:#555;letter-spacing:0.35px;text-indent:0.35px">4687</div>
<div class="abs" style="left:1293.4px;top:713.2px;width:63.2px;height:29.5px;background:#fff;border:1px solid #dcdcdc;border-radius:4px"></div>
<div class="f" style="left:1293.4px;width:63.2px;text-align:center;top:717.7px;font-size:15px;line-height:20px;color:#555;letter-spacing:0.35px;text-indent:0.35px">Next &gt;</div>
<div class="abs" style="left:1363.2px;top:713.2px;width:42.1px;height:29.5px;background:#fff;border:1px solid #dcdcdc;border-radius:4px"></div>
<div class="f" style="left:1363.2px;width:42.1px;text-align:center;top:717.7px;font-size:15px;line-height:20px;color:#555;letter-spacing:0.35px;text-indent:0.35px">Last</div>
<div class="f" style="left:1413.4px;top:717.7px;font-size:15px;line-height:20px;color:#555;"><span style="letter-spacing:-0.268px">PerPage</span></div>
<div class="abs" style="left:1475.6px;top:715.3px;width:43px;height:24.4px;background:#fff;border:1px solid #cfcfcf;border-radius:3px"></div>
<div class="f" style="left:1475.6px;width:43px;text-align:center;top:717.2px;font-size:15px;line-height:20px;color:#555;">1</div>
<div class="f" style="left:1530.1px;top:717.7px;font-size:15px;line-height:20px;color:#555;"><span style="letter-spacing:0.163px">Total</span></div>
<div class="f" style="left:1570.3px;top:717.7px;font-size:15px;line-height:20px;color:#555;"><span style="font-weight:bold;font-size:16.25px;letter-spacing:0.036px">4687</span></div>
<div class="abs" style="left:1619px;top:375px;width:43px;height:152.5px;background:#575757;border-radius:5px 0 0 5px;box-shadow:0 4px 12px rgba(0,0,0,.45)"></div>
<svg class="abs" style="left:1627.5px;top:384px" width="23.5" height="23.5" viewBox="0 0 22 22" ><path d="M4.2 12 V10.2 a6.8 6.8 0 0 1 13.6 0 V12" fill="none" stroke="#fff" stroke-width="2"/><rect x="2.6" y="10.5" width="3.6" height="6.2" rx="1.6" fill="#fff"/><rect x="15.8" y="10.5" width="3.6" height="6.2" rx="1.6" fill="#fff"/><path d="M17.8 16.5 v.8 a2.4 2.4 0 0 1 -2.4 2.4 H13" stroke="#fff" stroke-width="1.5" fill="none"/><circle cx="12.5" cy="19.7" r="1.5" fill="#fff"/></svg>
<div class="f" style="left:1624px;width:28px;text-align:center;top:411px;font-size:15px;line-height:17px;color:#fff;">人</div>
<div class="f" style="left:1624px;width:28px;text-align:center;top:427.5px;font-size:15px;line-height:17px;color:#fff;">工</div>
<div class="f" style="left:1624px;width:28px;text-align:center;top:444px;font-size:15px;line-height:17px;color:#fff;">客</div>
<div class="f" style="left:1624px;width:28px;text-align:center;top:460.5px;font-size:15px;line-height:17px;color:#fff;">服</div>
<div class="abs" style="left:1619px;top:489.5px;width:33px;height:1px;background:#8a8a8a"></div>
<svg class="abs" style="left:1631px;top:503px" width="12" height="13" viewBox="0 0 12 13" ><path d="M1.5 1.5 L6 6.5 L1.5 11.5 M6.5 1.5 L11 6.5 L6.5 11.5" fill="none" stroke="#fff" stroke-width="1.3"/></svg>
<div class="abs" style="left:1610px;top:609px;width:44px;height:44px;background:#3c78ff;border-radius:50%"></div>
<div class="f " style="left:1623.5px;top:621.5px;font-size:17.5px;line-height:20px;color:#fff;font-weight:bold;letter-spacing:.3px">AI</div>
</div>
</body>
</html>
